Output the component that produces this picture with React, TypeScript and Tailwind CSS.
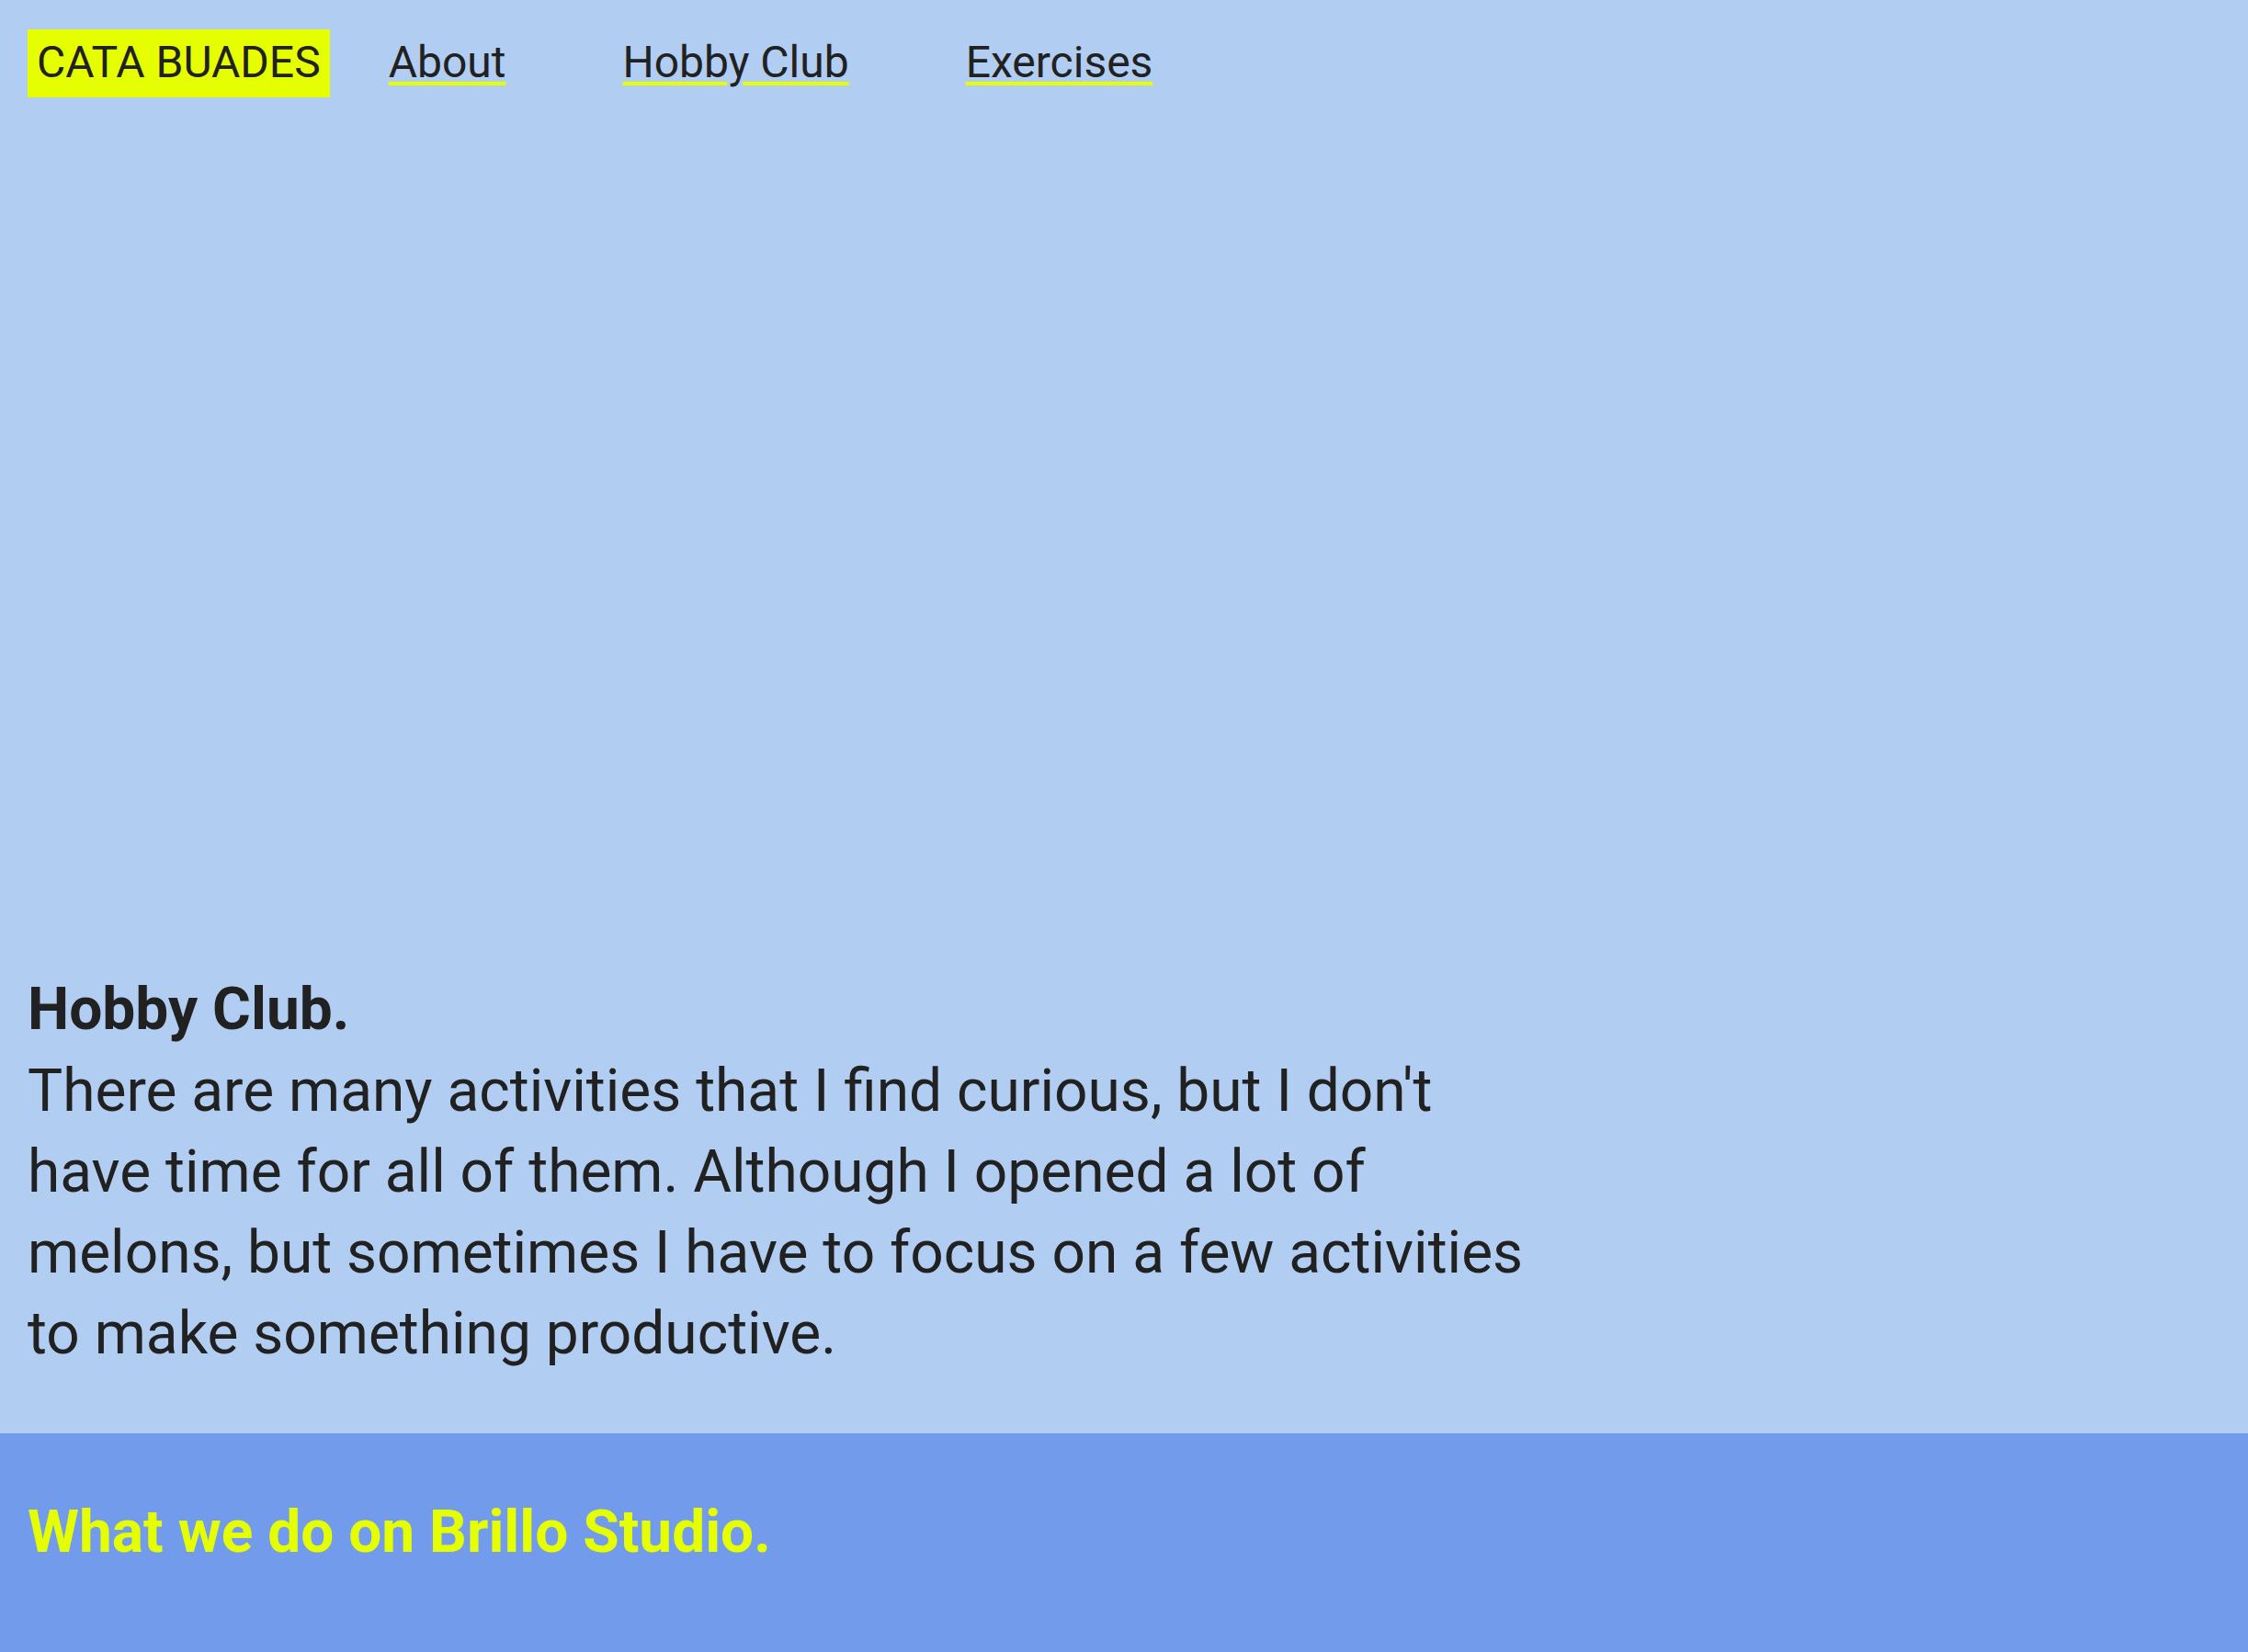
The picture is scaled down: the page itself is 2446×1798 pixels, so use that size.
const links = ["About", "Hobby Club", "Exercises"];

export default function App() {
  return (
    <div className="min-h-screen bg-[#b1cdf1] text-[#212121] font-['Roboto',sans-serif]">
      <nav className="flex items-start px-[30px] pt-[32px]">
        <a className="bg-[#e6ff00] px-[10px] pt-[8px] pb-[10px] text-[48px] leading-[56px]">
          CATA BUADES
        </a>
        {links.map((l) => (
          <a
            key={l}
            href="#"
            className="ml-[64px] mr-[63px] pt-[8px] text-[48px] leading-[56px] underline decoration-[#e6ff00] decoration-4 underline-offset-[5px]"
          >
            {l}
          </a>
        ))}
      </nav>

      <main className="flex h-[1454px] flex-col justify-end px-[30px] pb-[64px]">
        <div className="w-[1670px] text-[64px] leading-[88px]">
          <h1 className="font-bold">Hobby Club.</h1>
          <p className="mt-[1px]">
            There are many activities that I find curious, but I don't have
            time for all of them. Although I opened a lot of melons, but
            sometimes I have to focus on a few activities to make something
            productive.
          </p>
        </div>
      </main>

      <footer className="bg-[#739beb] px-[30px] pt-[64px] pb-[90px]">
        <h2 className="text-[64px] leading-[88px] font-bold text-[#e6ff00]">
          What we do on Brillo Studio.
        </h2>
      </footer>
    </div>
  );
}
